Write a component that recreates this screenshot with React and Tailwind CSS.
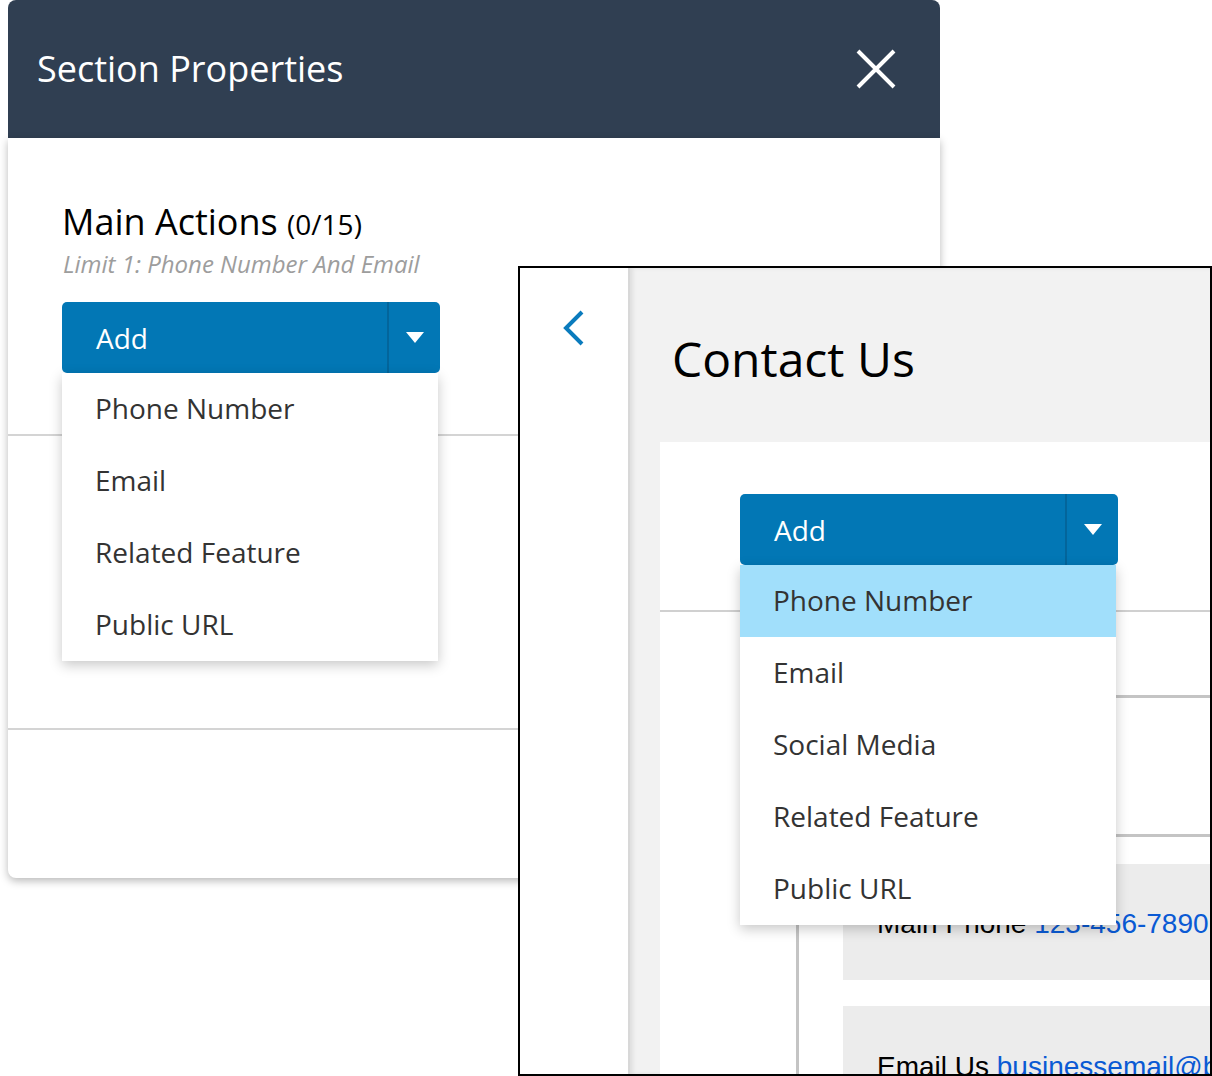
import React from "react";

const leftItems = ["Phone Number", "Email", "Related Feature", "Public URL"];
const rightItems = ["Phone Number", "Email", "Social Media", "Related Feature", "Public URL"];

function Caret() {
  return (
    <svg width="18" height="11" viewBox="0 0 18 11">
      <polygon points="0,0 18,0 9,11" fill="#fff" />
    </svg>
  );
}

function AddButton({ items, highlight }) {
  return (
    <div className="relative w-[378px]">
      <div className="flex h-[71px] rounded-[5px] bg-[#0277b5]">
        <div className="flex flex-1 items-center pl-[34px] text-[28px] text-white">Add</div>
        <div className="flex w-[53px] items-center justify-center border-l-2 border-[#03659b]">
          <Caret />
        </div>
      </div>
      <div className="absolute left-0 top-[71px] z-10 w-[376px] bg-white shadow-[0_4px_12px_rgba(0,0,0,0.22)]">
        {items.map((item, idx) => (
          <div
            key={item}
            className={
              "flex h-[72px] items-center pb-[2px] pl-[33px] text-[28px] text-[#333] " +
              (highlight && idx === 0 ? "bg-[#a1dffb]" : "")
            }
          >
            {item}
          </div>
        ))}
      </div>
    </div>
  );
}

export default function App() {
  return (
    <div className="relative h-[1076px] w-[1212px] overflow-hidden bg-white font-['Open_Sans',sans-serif]">
      {/* section properties panel */}
      <div className="ml-[8px] w-[932px]">
        <div className="flex h-[138px] items-center justify-between rounded-t-[8px] bg-[#303f52] pl-[29px] pr-[44px]">
          <div className="text-[36px] text-white">Section Properties</div>
          <svg width="40" height="40" viewBox="0 0 40 40">
            <path d="M2 2L38 38M38 2L2 38" stroke="#fff" strokeWidth="4" />
          </svg>
        </div>
        <div className="h-[740px] rounded-b-[8px] bg-white shadow-[0_3px_8px_rgba(0,0,0,0.28)]">
          <div className="h-[298px] border-b-2 border-[#d4d4d4] pl-[54px] pt-[63px]">
            <div className="h-[42px] text-[36px] leading-[42px] text-black">
              Main Actions <span className="text-[28px]">(0/15)</span>
            </div>
            <div className="mt-[7px] pl-[1px] text-[24px] italic leading-[28px] text-[#9d9d9d]">
              Limit 1: Phone Number And Email
            </div>
            <div className="mt-[24px]">
              <AddButton items={leftItems} />
            </div>
          </div>
          <div className="h-[294px] border-b-2 border-[#d4d4d4]"></div>
        </div>
      </div>

      {/* contact us preview */}
      <div className="absolute left-[518px] top-[266px] z-20 flex h-[810px] w-[694px] overflow-hidden border-2 border-black bg-white">
        <div className="flex w-[108px] shrink-0 justify-center pt-[42px]">
          <svg width="22" height="36" viewBox="0 0 22 36">
            <polyline points="19,2 3,18 19,34" fill="none" stroke="#0a7bbd" strokeWidth="4" />
          </svg>
        </div>
        <div className="flex-1 border-l-2 border-[#d8d8d8] bg-[#f2f2f2] shadow-[inset_3px_0_4px_rgba(0,0,0,0.08)]">
          <div className="h-[174px] pl-[42px] pt-[63px] text-[48px] leading-[56px] text-black">Contact Us</div>
          <div className="ml-[30px] w-[700px] bg-white">
            <div className="h-[170px] border-b-2 border-[#d0d0d0] pl-[80px] pt-[52px]">
              <AddButton items={rightItems} highlight />
            </div>
            <div className="pl-[136px] pt-[83px]">
              <div className="border-l-[3px] border-t-[3px] border-[#c4c4c4]">
                <div className="h-[139px] border-b-[3px] border-[#c4c4c4]"></div>
                <div className="pl-[44px] pt-[27px] font-['Liberation_Sans',Arial,sans-serif] text-[28px] leading-[32px] text-black">
                  <div className="h-[116px] bg-[#ececec] pl-[34px] pt-[44px]">
                    Main Phone <span className="text-[#0a5ad4]">123-456-7890</span>
                  </div>
                  <div className="mt-[26px] h-[120px] whitespace-nowrap bg-[#ececec] pl-[34px] pt-[45px]">
                    Email Us <span className="text-[#0a5ad4] underline">businessemail@business.com</span>
                  </div>
                </div>
              </div>
            </div>
          </div>
        </div>
      </div>
    </div>
  );
}
